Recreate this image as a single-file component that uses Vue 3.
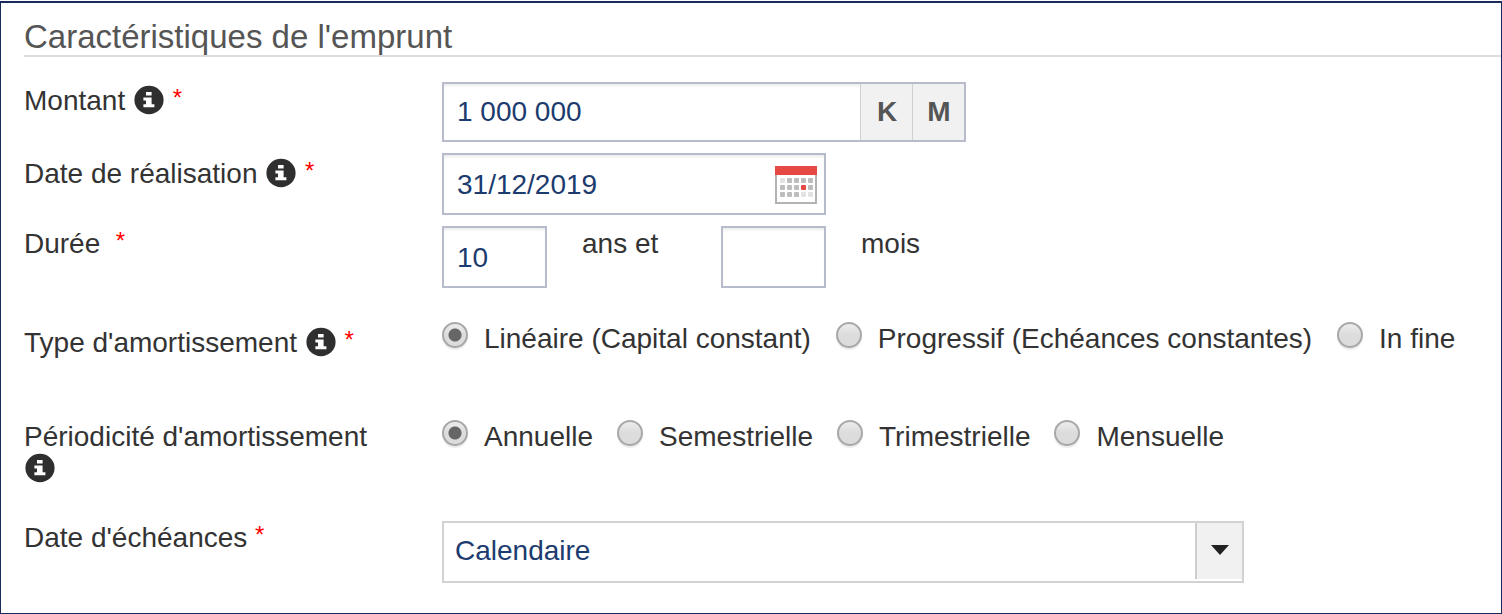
<script setup>
import { h, ref } from 'vue'

const amount = ref('1 000 000')
const date = ref('31/12/2019')
const years = ref('10')
const months = ref('')
const type = ref('lineaire')
const period = ref('annuelle')
const schedule = ref('calendaire')

const types = [
  { value: 'lineaire', label: 'Linéaire (Capital constant)' },
  { value: 'progressif', label: 'Progressif (Echéances constantes)' },
  { value: 'infine', label: 'In fine' },
]
const periods = [
  { value: 'annuelle', label: 'Annuelle' },
  { value: 'semestrielle', label: 'Semestrielle' },
  { value: 'trimestrielle', label: 'Trimestrielle' },
  { value: 'mensuelle', label: 'Mensuelle' },
]

const days = []
for (let r = 0; r < 3; r++) {
  for (let c = 0; c < 5; c++) {
    let fill = '#bdbdbd'
    if ((r === 0 && c === 0) || (r === 2 && c > 2)) fill = '#e2e2e2'
    if (r === 1 && c === 3) fill = '#e64843'
    days.push({ x: 5 + c * 7, y: 12 + r * 7, fill })
  }
}

const InfoIcon = () =>
  h('svg', { viewBox: '0 0 30 30', width: 30, height: 30, 'aria-hidden': 'true' }, [
    h('ellipse', { cx: 15, cy: 15, rx: 14.6, ry: 14.2, fill: '#2f2f2f' }),
    h('path', {
      fill: '#fff',
      d: 'M12 7h5.6v3.6H12zM9.4 12.4h8.2v6.8h2.8v3H9.4v-3H12v-3.8H9.4z',
    }),
  ])

function multiply(zeros) {
  const n = amount.value.replace(/\D/g, '') + zeros
  amount.value = n.replace(/\B(?=(\d{3})+$)/g, ' ')
}
</script>

<template>
  <div class="page">
    <form class="panel" @submit.prevent>
      <h2 class="title">Caractéristiques de l'emprunt</h2>

      <div class="row amount-row">
        <label class="label" for="amount">Montant <InfoIcon class="info" /> <span class="req">*</span></label>
        <div class="box amount">
          <input id="amount" v-model="amount" class="bare" type="text" />
          <button class="unit" type="button" @click="multiply('000')">K</button>
          <button class="unit" type="button" @click="multiply('000000')">M</button>
        </div>
      </div>

      <div class="row date-row">
        <label class="label" for="date">Date de réalisation <InfoIcon class="info" /> <span class="req">*</span></label>
        <div class="box date">
          <input id="date" v-model="date" class="bare" type="text" />
          <button class="picker" type="button" aria-label="Calendrier">
            <svg viewBox="0 0 42 38" width="42" height="38" aria-hidden="true">
              <path d="M0 0h42v38H0z" fill="#b3b3b3" />
              <path d="M2 9h38v27H2z" fill="#fff" />
              <path d="M0 0h42v9H0z" fill="#e64843" />
              <rect v-for="(d, i) in days" :key="i" :x="d.x" :y="d.y" width="5" height="5" rx="1" :fill="d.fill" />
            </svg>
          </button>
        </div>
      </div>

      <div class="row duration-row">
        <label class="label" for="years">Durée &nbsp;<span class="req">*</span></label>
        <div class="duration">
          <input id="years" v-model="years" class="box small" type="text" />
          <label class="suffix" for="years">ans et</label>
          <input id="months" v-model="months" class="box small" type="text" />
          <label class="suffix" for="months">mois</label>
        </div>
      </div>

      <div class="row type-row" role="radiogroup" aria-labelledby="type-label">
        <div id="type-label" class="label">Type d'amortissement <InfoIcon class="info" /> <span class="req">*</span></div>
        <div class="options">
          <label v-for="o in types" :key="o.value" class="option">
            <input v-model="type" class="radio" type="radio" name="type" :value="o.value" />
            <span>{{ o.label }}</span>
          </label>
        </div>
      </div>

      <div class="row period-row" role="radiogroup" aria-labelledby="period-label">
        <div id="period-label" class="label">Périodicité d'amortissement <InfoIcon class="info" /></div>
        <div class="options">
          <label v-for="o in periods" :key="o.value" class="option">
            <input v-model="period" class="radio" type="radio" name="period" :value="o.value" />
            <span>{{ o.label }}</span>
          </label>
        </div>
      </div>

      <div class="row schedule-row">
        <label class="label" for="schedule">Date d'échéances <span class="req">*</span></label>
        <div class="choice">
          <select id="schedule" v-model="schedule" class="select">
            <option value="calendaire">Calendaire</option>
          </select>
          <span class="arrow">
            <svg viewBox="0 0 18 10" width="18" height="10" aria-hidden="true">
              <path d="M0 0h18L9 10z" fill="#222" />
            </svg>
          </span>
        </div>
      </div>
    </form>
  </div>
</template>

<style>
body {
  background: #fff;
}
</style>

<style scoped>
.page {
  display: flex;
  flex-direction: column;
  box-sizing: border-box;
  min-height: 100vh;
  padding-top: 1px;
  font-family: "Liberation Sans", Arial, sans-serif;
  font-size: 28px;
  line-height: 34px;
  color: #333;
}
.page * {
  box-sizing: border-box;
}
.panel {
  flex: 1;
  padding: 15px 0 30px 23px;
  border: 1px solid #1b2a5c;
  border-top-width: 2px;
}
.title {
  margin: 0 0 25px;
  border-bottom: 2px solid #dcdcdc;
  font-size: 33px;
  font-weight: 400;
  line-height: 37px;
  color: #555;
}
.row {
  display: grid;
  grid-template-columns: 418px minmax(0, 1fr);
  align-items: start;
}
.date-row,
.duration-row {
  margin-top: 11px;
}
.type-row {
  margin-top: 34px;
}
.period-row {
  margin-top: 60px;
}
.schedule-row {
  margin-top: 35px;
}
.label {
  padding-right: 40px;
}
.amount-row .label {
  padding-top: 2px;
}
.date-row .label,
.type-row .label {
  padding-top: 4px;
}
.duration-row .label,
.suffix {
  padding-top: 1px;
}
.period-row .label {
  padding-top: 1px;
}
.period-row .label {
  line-height: 32px;
  padding-bottom: 1px;
}
.period-row .options {
  column-gap: 24px;
}
.info {
  display: inline-block;
  height: 30px;
  vertical-align: -2px;
  margin: -3px 1px;
}
.req {
  font-size: 24px;
  line-height: 1;
  vertical-align: 4px;
  color: #f00;
}
.box {
  display: flex;
  align-items: stretch;
  height: 62px;
  border: 2px solid #b6bccb;
  border-radius: 0;
  background: #fff;
  box-shadow: inset 0 3px 3px -1px #ececec;
}
.box,
.bare,
.unit,
.select {
  font: inherit;
  color: #1c3b6e;
}
.bare {
  flex: 1;
  min-width: 0;
  padding: 0 13px;
  border: 0;
  background: transparent;
}
.date .bare,
.small {
  padding-top: 2px;
}
.amount {
  width: 524px;
  max-width: 100%;
  height: 60px;
}
.unit {
  width: 52px;
  padding: 0 0 0 1px;
  border: 0;
  border-left: 1px solid #d0d0d0;
  background: #f1f1f1;
  font-weight: 700;
  color: #555;
}
.date {
  width: 384px;
  max-width: 100%;
}
.picker {
  display: flex;
  align-items: center;
  padding: 2px 7px 0;
  border: 0;
  background: transparent;
}
.duration {
  display: grid;
  grid-template-columns: 105px 174px 105px auto;
}
.small {
  width: 100%;
  padding-left: 13px;
  padding-right: 13px;
}
.suffix {
  padding-left: 35px;
}
.options {
  display: flex;
  flex-wrap: wrap;
  column-gap: 25px;
}
.option {
  display: flex;
  align-items: flex-start;
  gap: 16px;
}
.radio {
  appearance: none;
  flex: none;
  width: 26px;
  height: 26px;
  margin: 0;
  border: 2px solid #a8a8a8;
  border-radius: 50%;
  background: linear-gradient(#ececec, #dcdcdc 50%);
  box-shadow: 0 2px 1px #ececec;
}
.radio:checked {
  background: radial-gradient(circle, #666 0 6px, transparent 7px), linear-gradient(#ececec, #dcdcdc 50%);
}
.choice {
  position: relative;
  width: 802px;
  max-width: 100%;
}
.select {
  appearance: none;
  display: block;
  width: 100%;
  height: 62px;
  padding: 0 60px 2px 11px;
  border: 2px solid #d2d2d2;
  border-radius: 0;
  background: #fff;
}
.arrow {
  position: absolute;
  top: 2px;
  right: 2px;
  bottom: 4px;
  display: flex;
  align-items: center;
  justify-content: center;
  width: 47px;
  padding-bottom: 2px;
  border-left: 2px solid #cecece;
  background: #f1f1f1;
  pointer-events: none;
}
</style>
